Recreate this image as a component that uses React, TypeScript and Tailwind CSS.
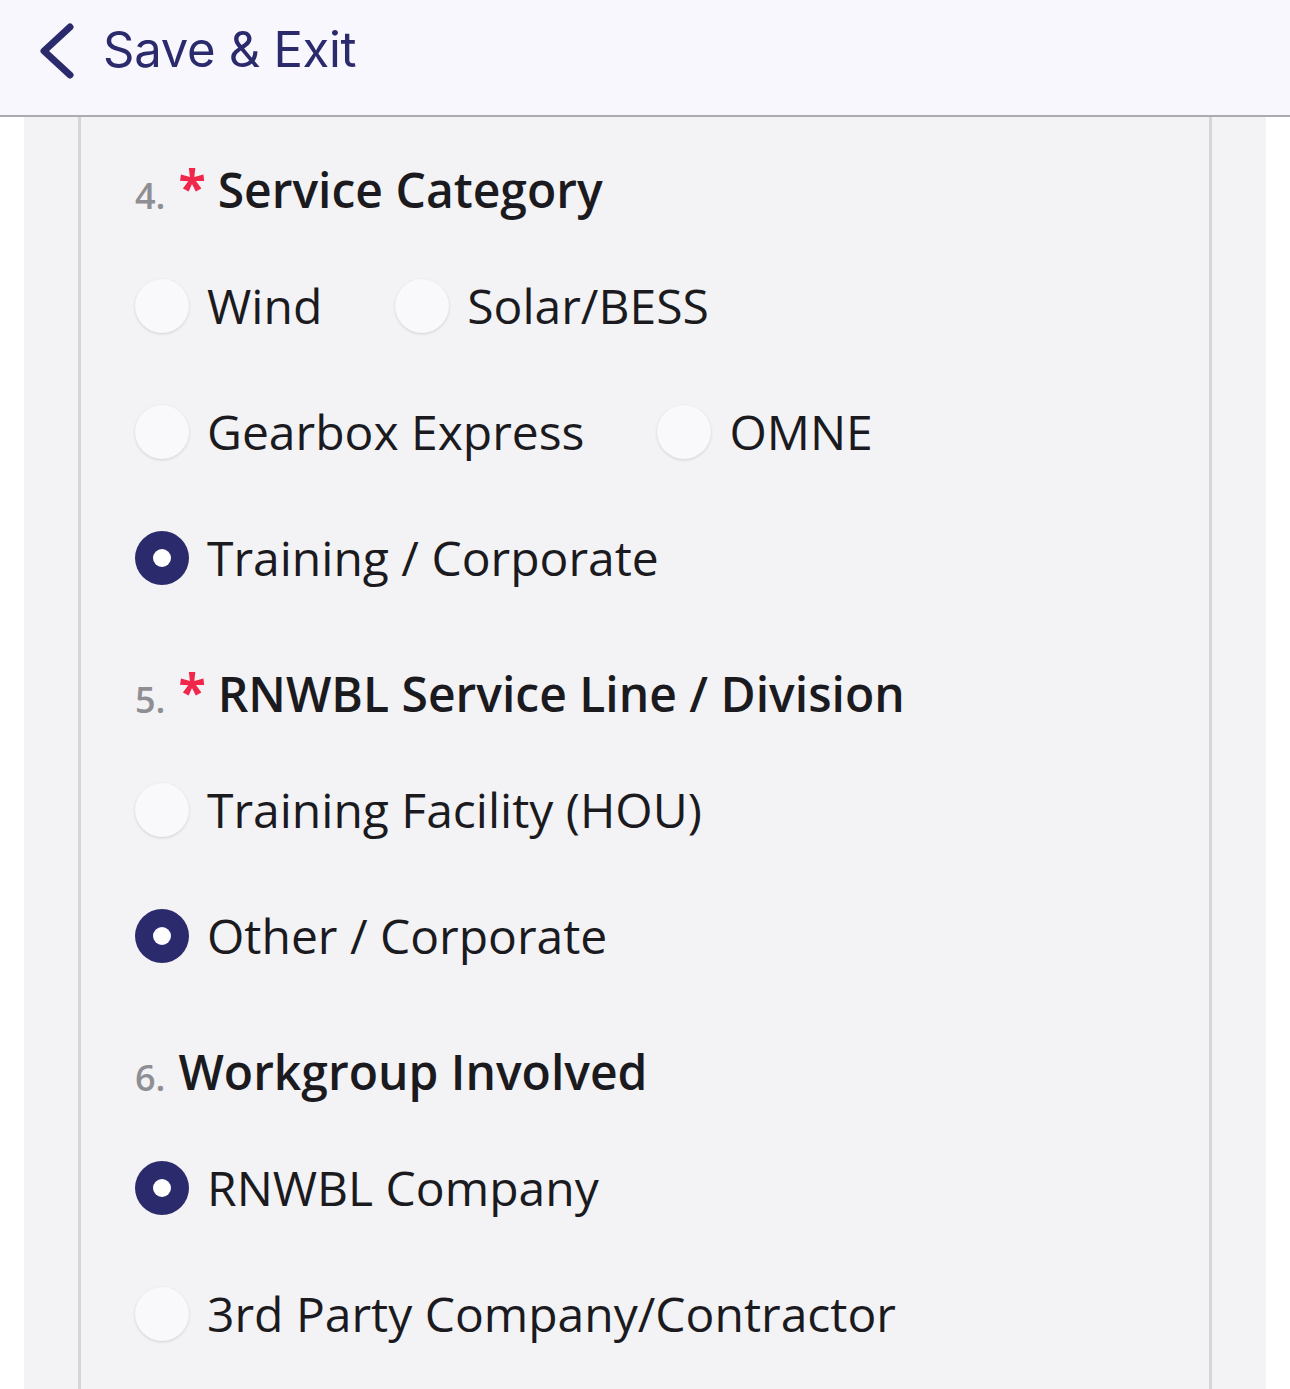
import React from "react"

type Option = { label: string; checked?: boolean }

const sections: { num: string; title: string; required: boolean; rows: Option[][] }[] = [
  {
    num: "4.",
    title: "Service Category",
    required: true,
    rows: [
      [{ label: "Wind" }, { label: "Solar/BESS" }],
      [{ label: "Gearbox Express" }, { label: "OMNE" }],
      [{ label: "Training / Corporate", checked: true }],
    ],
  },
  {
    num: "5.",
    title: "RNWBL Service Line / Division",
    required: true,
    rows: [
      [{ label: "Training Facility (HOU)" }],
      [{ label: "Other / Corporate", checked: true }],
    ],
  },
  {
    num: "6.",
    title: "Workgroup Involved",
    required: false,
    rows: [
      [{ label: "RNWBL Company", checked: true }],
      [{ label: "3rd Party Company/Contractor" }],
    ],
  },
]

function Radio({ checked }: { checked?: boolean }) {
  if (checked) {
    return (
      <div className="w-[54px] h-[54px] rounded-full bg-[#2b2a6c] flex items-center justify-center shrink-0">
        <div className="w-[18px] h-[18px] rounded-full bg-white" />
      </div>
    )
  }
  return (
    <div className="w-[54px] h-[54px] rounded-full bg-[#f9f8fb] shadow-[0_1px_3px_rgba(0,0,0,0.14)] shrink-0" />
  )
}

export default function App() {
  return (
    <div className="w-[1290px] h-[1389px] bg-white overflow-hidden font-['Open_Sans',sans-serif]">
      {/* Header */}
      <div className="h-[117px] bg-[#f8f7fd] border-b-2 border-[#acabb0] flex items-center pl-[40px]">
        <svg width="34" height="56" viewBox="0 0 34 56" className="mb-[14px]">
          <path d="M30 4 L4 28 L30 52" fill="none" stroke="#2b2a6c" strokeWidth="7" strokeLinecap="round" strokeLinejoin="round" />
        </svg>
        <span className="ml-[29px] text-[49px] leading-none text-[#2b2a6c] font-['Inter',sans-serif] tracking-[-0.3px] mb-[16px]">
          Save &amp; Exit
        </span>
      </div>

      {/* Body */}
      <div className="mx-[24px] h-full bg-[#f3f2f5] px-[54px]">
        <div className="h-full border-x-[3px] border-[#d6d5d9] pl-[54px]">
          {sections.map((s) => (
            <div key={s.num} className="pt-[43px]">
              <div className="h-[60px] flex items-center mb-[23px] whitespace-nowrap">
                <span className="text-[36px] font-semibold text-[#8e8e93] mt-[12px] mr-[13px]">{s.num}</span>
                {s.required && (
                  <span className="text-[50px] font-bold text-[#f0264a] mr-[12px] mt-[-6px]">*</span>
                )}
                <span className="text-[48px] font-semibold text-[#1b1b1f] leading-none">{s.title}</span>
              </div>
              {s.rows.map((row, i) => (
                <div key={i} className="h-[126px] flex items-center gap-x-[73px]">
                  {row.map((o) => (
                    <div key={o.label} className="flex items-center gap-[18px]">
                      <Radio checked={o.checked} />
                      <span className="text-[48px] text-[#1b1b1f] leading-none whitespace-nowrap">{o.label}</span>
                    </div>
                  ))}
                </div>
              ))}
            </div>
          ))}
        </div>
      </div>
    </div>
  )
}
